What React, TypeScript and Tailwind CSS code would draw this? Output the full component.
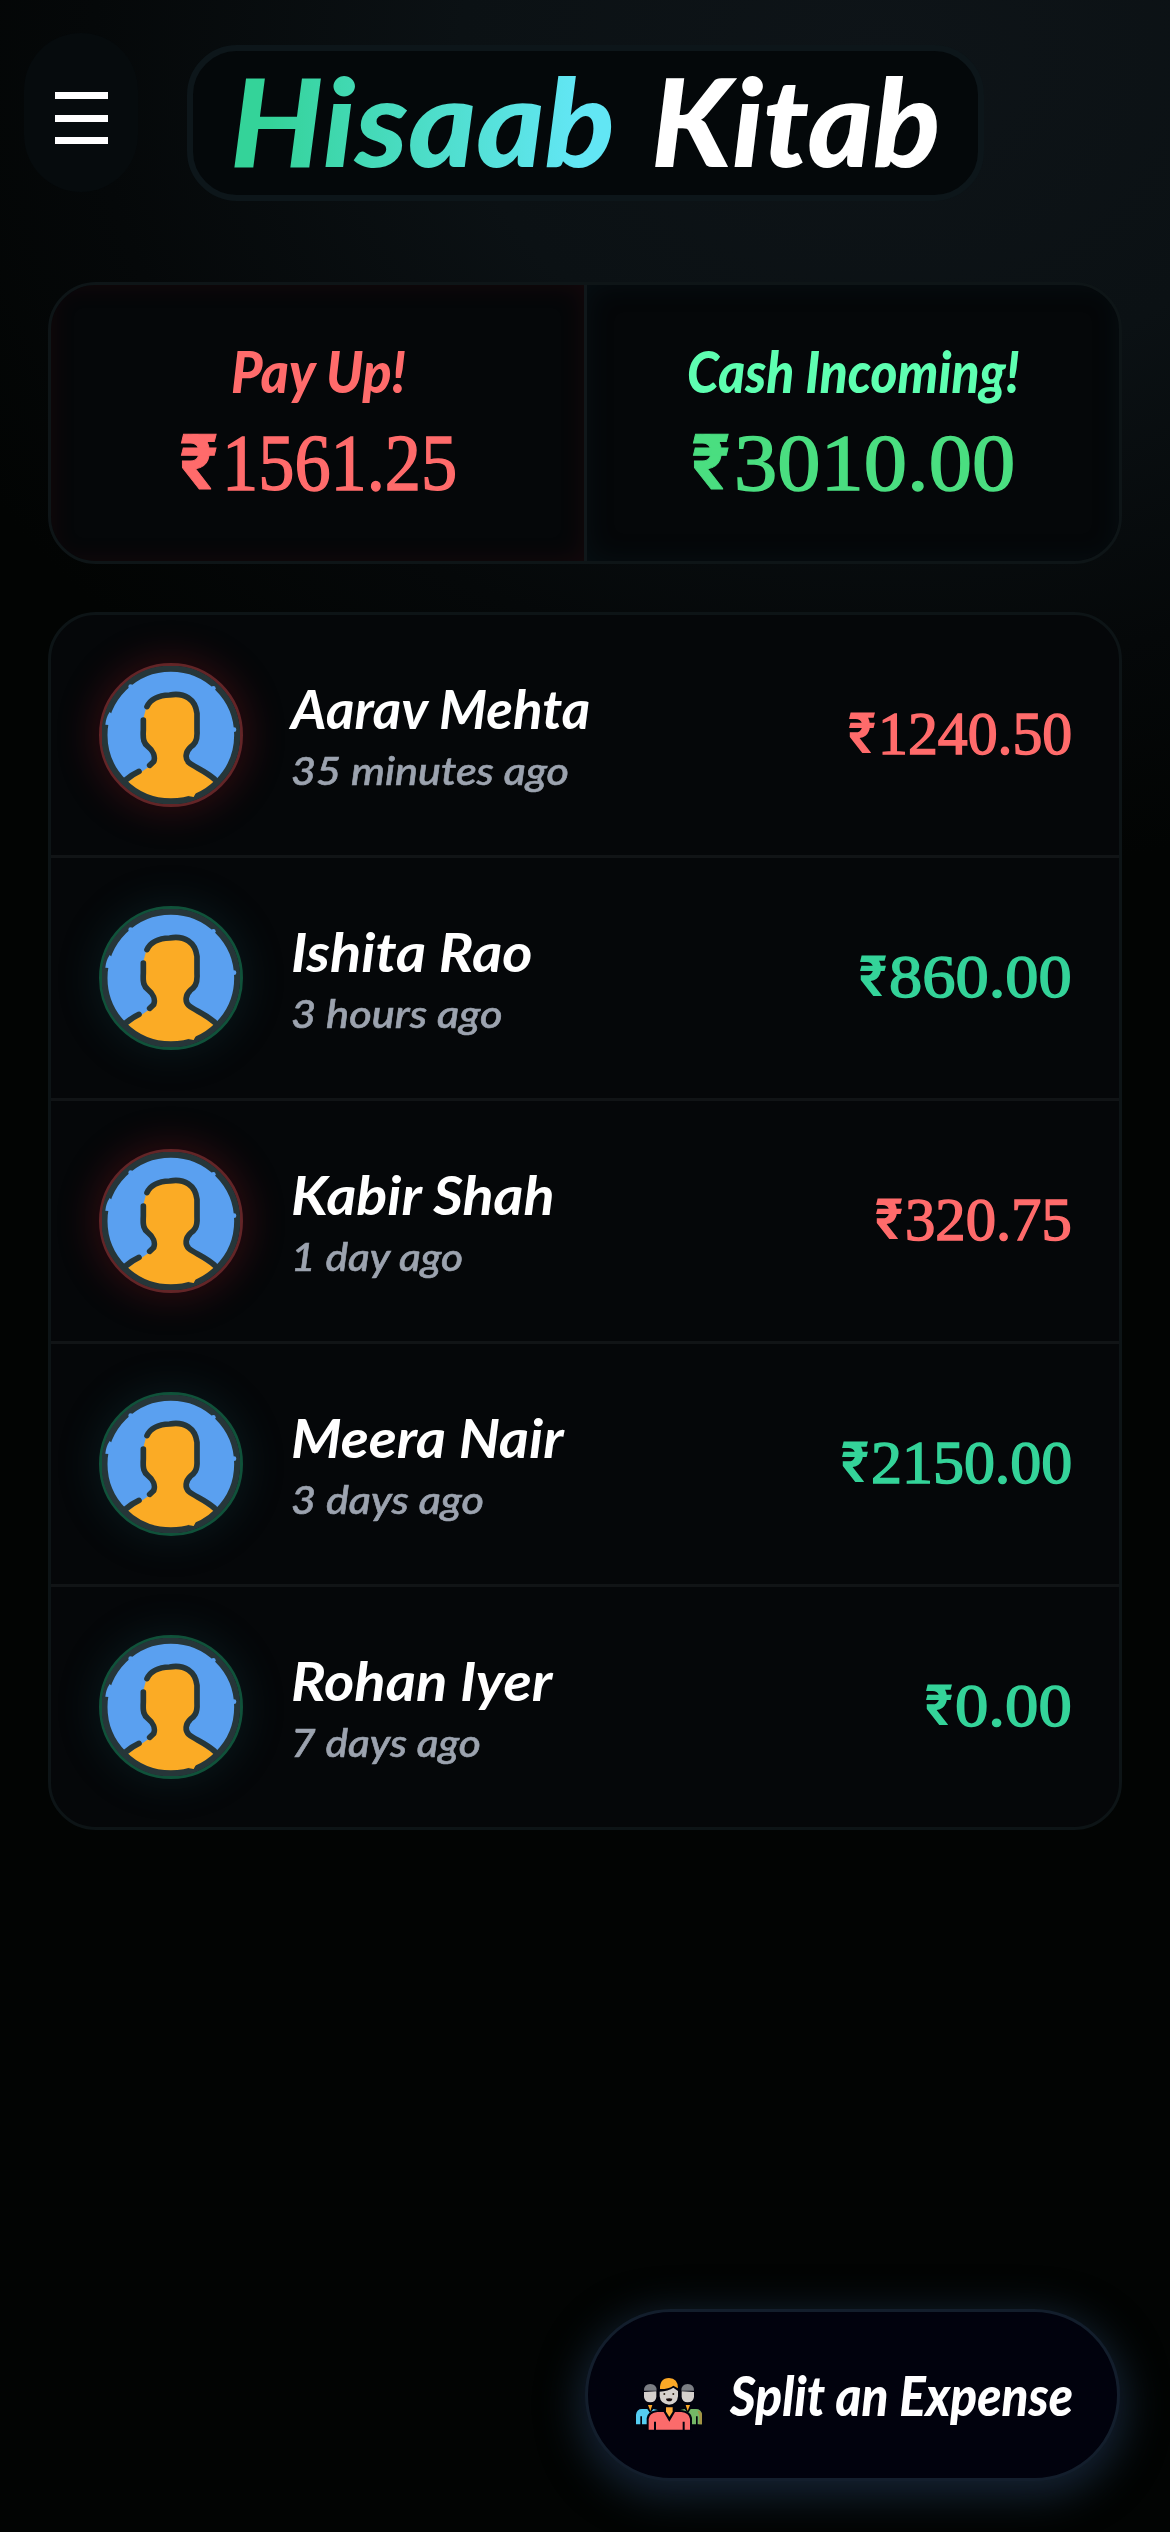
import { useLayoutEffect, useRef, useState } from "react";
import type { ReactNode } from "react";

type Tone = "owe" | "due";

interface Entry {
  name: string;
  nameWidth: number;
  ago: string;
  agoWidth: number;
  amount: string;
  amountWidth: number;
  tone: Tone;
}

const entries: Entry[] = [
  { name: "Aarav Mehta", nameWidth: 299, ago: "35 minutes ago", agoWidth: 278, amount: "1240.50", amountWidth: 194, tone: "owe" },
  { name: "Ishita Rao", nameWidth: 242, ago: "3 hours ago", agoWidth: 211, amount: "860.00", amountWidth: 183, tone: "due" },
  { name: "Kabir Shah", nameWidth: 264, ago: "1 day ago", agoWidth: 172, amount: "320.75", amountWidth: 167, tone: "owe" },
  { name: "Meera Nair", nameWidth: 273, ago: "3 days ago", agoWidth: 193, amount: "2150.00", amountWidth: 201, tone: "due" },
  { name: "Rohan Iyer", nameWidth: 261, ago: "7 days ago", agoWidth: 190, amount: "0.00", amountWidth: 117, tone: "due" },
];

/** Stretches a single line of text horizontally so that it fills the given width. */
function Fit({ width, className = "", children }: { width: number; className?: string; children: ReactNode }) {
  const ref = useRef<HTMLSpanElement>(null);
  const [scale, setScale] = useState(1);
  useLayoutEffect(() => {
    const natural = ref.current?.offsetWidth ?? width;
    setScale(width / natural);
  }, [width]);
  return (
    <span className="block whitespace-nowrap" style={{ width }}>
      <span ref={ref} className={`inline-block origin-left align-top ${className}`} style={{ transform: `scaleX(${scale})` }}>
        {children}
      </span>
    </span>
  );
}

function Avatar({ tone }: { tone: Tone }) {
  return (
    <div
      className={
        tone === "owe"
          ? "size-36 shrink-0 rounded-full border-[3px] border-[#632527] bg-[#0b1114] shadow-[0_0_36px_6px_rgba(150,25,35,0.28)]"
          : "size-36 shrink-0 rounded-full border-[3px] border-[#10523a] bg-[#0b1114] shadow-[0_0_40px_4px_rgba(30,90,100,0.2)]"
      }
    >
      <svg viewBox="97 108 414 414" className="block size-full" fill="none" strokeLinecap="round">
        <circle cx="303.5" cy="315" r="196" fill="#5aa0f0" />
        <path
          d="M230 232C245 207 275 200 310 198C350 193 377 220 377 260V305C379 335 365 350 352 360C342 375 345 395 357 403L434 456C400 490 352 508 303 508C250 508 205 485 173 457L212 428L245 405C257 390 257 370 243 355C225 345 220 325 226 305L222 262Z"
          fill="#fbab25"
        />
        <circle cx="303.5" cy="315" r="199" stroke="#263639" strokeWidth="18" />
        <g stroke="#263639" strokeWidth="17">
          <path d="M232 230C242 208 268 196 300 195C345 187 377 208 382 250V303C384 335 373 344 362 352C347 366 345 386 358 398C375 412 405 422 434 447" />
          <path d="M221 270V300C219 330 223 340 235 350C250 362 258 380 252 395L240 406" />
          <path d="M208 424Q188 433 168 450" />
        </g>
        <g fill="#5aa0f0">
          <circle cx="183" cy="170" r="7" />
          <circle cx="431" cy="175" r="7" />
          <path d="M120 246L127 252L118 285L107 284Q109 262 120 246Z" />
          <circle cx="493" cy="299" r="7" />
        </g>
        <path d="M361 497L376 489L371 499Z" fill="#fbab25" stroke="#fbab25" strokeWidth="4" />
      </svg>
    </div>
  );
}

function GroupIcon() {
  return (
    <svg viewBox="42 82 210 168" className="h-14 w-[70px] shrink-0">
      <path d="M72 123Q72 103 91 103Q110 103 110 123Z" fill="#7b7e83" />
      <path d="M72 127L109 125V142Q107 158 91 158Q74 158 72 142Z" fill="#d5d0cd" />
      <path d="M84 166H97L91 184Z" fill="#fba826" />
      <path d="M48 224V195Q50 178 66 178L82 178L90 190L100 178L116 182L86 200L82 224H66V200H61V224Z" fill="#55cdf2" />
      <path d="M184 123Q184 103 203 103Q222 103 222 123Z" fill="#7b7e83" />
      <path d="M185 125L222 127V142Q220 158 203 158Q187 158 185 142Z" fill="#d5d0cd" />
      <path d="M197 166H210L203 184Z" fill="#fba826" />
      <path d="M246 224V195Q244 178 228 178L212 178L204 190L194 178L178 182L208 200L212 224H228V200H233V224Z" fill="#74b766" />
      <path d="M233 183Q246 184 246 196V224H238V200Z" fill="#a39444" />
      <path d="M80 246V205Q82 187 108 182L131 180H165L188 182Q214 187 216 205V246Z" fill="#01020d" />
      <path d="M114 122V142Q116 171 147 171Q178 171 180 142V122Z" fill="#01020d" />
      <path d="M120 120Q118 86 147 85Q174 86 174 116L160 108Q148 118 120 118Z" fill="#fba826" />
      <path d="M119 126Q145 124 160 114L174 124V140Q172 164 147 165Q121 163 119 140Z" fill="#d5d0cd" />
      <circle cx="133" cy="133" r="3" fill="#302417" />
      <circle cx="160" cy="133" r="3" fill="#302417" />
      <path d="M138 147Q148 144 157 147Q156 155 148 155Q139 155 138 147Z" fill="#16090b" />
      <path d="M138 173H158V186L148 202L138 186Z" fill="#fba93a" />
      <path d="M86 240V208Q88 190 112 187H131L148 216L165 187H184Q208 190 210 208V240H194V216H188V240H108V216H102V240Z" fill="#fb6b6b" />
    </svg>
  );
}

function Total({ label, labelWidth, amount, amountWidth, labelTone, amountTone, frame }: {
  label: string;
  labelWidth: number;
  amount: string;
  amountWidth: number;
  labelTone: string;
  amountTone: string;
  frame: string;
}) {
  return (
    <div className={`flex h-[276px] flex-1 flex-col items-center pt-[52px] ${frame}`}>
      <div className={`ml-0.5 font-['Lato',sans-serif] text-[57px] leading-[68px] font-black italic ${labelTone}`}>
        <Fit width={labelWidth}>{label}</Fit>
      </div>
      <div className={`mt-[13px] ml-0.5 flex h-[90px] items-baseline gap-1 leading-[90px] ${amountTone}`}>
        <Fit width={38} className="font-['Roboto',sans-serif] text-[77px] font-bold [-webkit-text-stroke:1px_currentColor]">₹</Fit>
        <Fit width={amountWidth} className="font-['Liberation_Serif',serif] text-[81px] [-webkit-text-stroke:1.5px_currentColor]">{amount}</Fit>
      </div>
    </div>
  );
}

export default function App() {
  return (
    <main className="flex h-[2532px] w-full flex-col overflow-hidden bg-[#020403] bg-[radial-gradient(ellipse_1050px_820px_at_880px_60px,#0e1418_0%,#0b1114_40%,#050809_75%,#020403_100%)] font-['Lato',sans-serif]">
      <header className="flex h-[282px] shrink-0 items-start pt-[33px] pl-6">
        <button aria-label="Menu" className="flex h-[159px] w-[114px] flex-col items-center justify-center gap-[15.5px] rounded-full bg-[#060b0d] pt-[11px] [&>span]:h-[7px] [&>span]:w-[53px] [&>span]:bg-white">
          <span />
          <span />
          <span />
        </button>
        <h1 className="mt-3 ml-[49px] flex h-[156px] w-[797px] rounded-[50px] border-[6px] border-[#0d161a] bg-[#04080a] pl-[37px] text-[122px] leading-[138px] font-black italic">
          <Fit width={385} className="bg-linear-to-r from-[#34d399] from-10% to-[#62e6f4] to-90% bg-clip-text text-transparent">Hisaab</Fit>
          <span className="ml-[36px] text-white">
            <Fit width={289}>Kitab</Fit>
          </span>
        </h1>
      </header>

      <section className="mx-12 flex h-[282px] shrink-0 overflow-hidden rounded-[48px] border-[3px] border-[#0e1517] bg-[#050709]">
        <Total
          label="Pay Up!"
          labelWidth={175}
          amount="1561.25"
          amountWidth={235}
          labelTone="text-[#ff6b6b]"
          amountTone="text-[#ff6b6b]"
          frame="border-r-[3px] border-[#10171a] shadow-[inset_0_0_26px_rgba(150,20,30,0.13)]"
        />
        <Total
          label="Cash Incoming!"
          labelWidth={333}
          amount="3010.00"
          amountWidth={281}
          labelTone="text-[#5effb1]"
          amountTone="text-[#4ade80]"
          frame="shadow-[inset_0_0_30px_rgba(20,80,90,0.13)]"
        />
      </section>

      <section className="mx-12 mt-12 shrink-0 overflow-hidden rounded-[48px] border-[3px] border-[#0d1416] bg-[#050709]">
        {entries.map((entry) => (
          <article key={entry.name} className="flex h-[243px] items-center border-b-[3px] border-[#111416] pr-[47px] pl-12 last:h-60 last:border-b-0">
            <Avatar tone={entry.tone} />
            <div className="ml-12 flex-1 pt-[3px]">
              <h2 className="text-[54px] leading-[66px] font-bold text-white italic">
                <Fit width={entry.nameWidth}>{entry.name}</Fit>
              </h2>
              <p className="text-[38px] leading-[56px] font-medium text-[#9ca3af] italic [-webkit-text-stroke:0.6px_currentColor]">
                <Fit width={entry.agoWidth}>{entry.ago}</Fit>
              </p>
            </div>
            <div className={`flex h-[72px] items-baseline gap-0.5 leading-[70px] ${entry.tone === "owe" ? "text-[#ff6b6b]" : "text-[#34d399]"}`}>
              <Fit width={28} className="font-['Roboto',sans-serif] text-[57px] font-bold">₹</Fit>
              <Fit width={entry.amountWidth} className="font-['Liberation_Serif',serif] text-[61px] [-webkit-text-stroke:1.5px_currentColor]">{entry.amount}</Fit>
            </div>
          </article>
        ))}
      </section>

      <button className="mt-auto mr-[50px] mb-[51px] flex h-[172px] w-[535px] shrink-0 items-center self-end rounded-full border-[3px] border-[#131e2c] bg-[#01020d] pl-[46px] shadow-[0_10px_40px_6px_rgba(40,66,100,0.5)]">
        <span className="mt-5">
          <GroupIcon />
        </span>
        <span className="ml-[26px] text-[56px] leading-[70px] font-black text-white italic">
          <Fit width={343}>Split an Expense</Fit>
        </span>
      </button>
    </main>
  );
}
